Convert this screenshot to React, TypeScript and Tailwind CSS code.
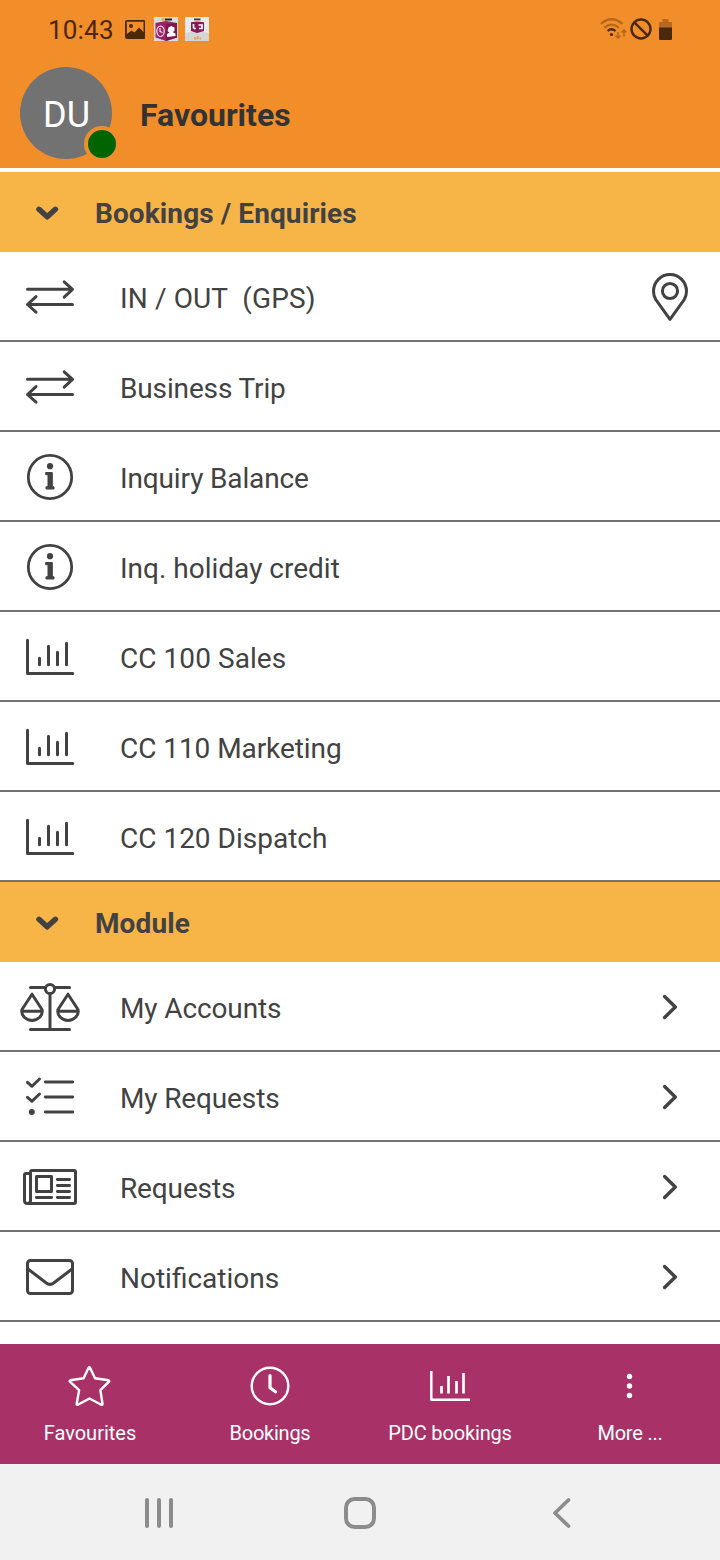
import type { ReactNode } from "react";

type Row = { label: string; icon: ReactNode; right?: ReactNode; tracking?: string };

const Icon = ({ children, className = "text-[#424242]" }: { children: ReactNode; className?: string }) => (
  <svg
    viewBox="0 0 60 60"
    width="60"
    height="60"
    fill="none"
    stroke="currentColor"
    strokeWidth="3"
    strokeLinecap="round"
    strokeLinejoin="round"
    className={`shrink-0 ${className}`}
  >
    {children}
  </svg>
);

const TransferIcon = () => (
  <Icon>
    <path d="M7.5 23.3H52.5M44.2 15.8L52.5 23.3L44.2 31.2" />
    <path d="M52.5 38.5H7.5M16 30.6L7.5 38.5L16 46.2" />
  </Icon>
);

const InfoIcon = () => (
  <Icon>
    <circle cx="30" cy="31" r="21.7" strokeWidth="2.8" />
    <circle cx="30" cy="20.2" r="3.1" fill="currentColor" stroke="none" />
    <path d="M26 26.5H32.3V40.8H34V43H26V40.8H28V28.7H26Z" fill="currentColor" strokeWidth="1" />
  </Icon>
);

const ChartIcon = () => (
  <Icon>
    <path d="M7.5 14.3V47.5H52.8" />
    <path d="M19.5 32.2V38.7M28.5 20.2V38.7M37.5 26.2V38.7M46.5 17.2V38.7" />
  </Icon>
);

const PinIcon = () => (
  <Icon>
    <path d="M30 53.3L15.8 33.6C14.2 31 13.5 28.5 13.5 25.3C13.5 15.8 21 8.5 30 8.5S46.5 15.8 46.5 25.3C46.5 28.5 45.8 31 44.2 33.6Z" />
    <circle cx="30" cy="25" r="7.6" />
  </Icon>
);

const ScaleIcon = () => (
  <Icon>
    <path d="M10.5 11.6H25M35 11.6H49.5M10.5 53.5H49.5M30 18V53" />
    <circle cx="30" cy="13" r="4.6" />
    <path d="M12 18.2L2 33.5C0.5 39.5 6.5 44.4 12 44.4S23.5 39.5 22 33.5ZM2 35.2H22" />
    <path d="M48 18.2L38 33.5C36.5 39.5 42.5 44.4 48 44.4S59.5 39.5 58 33.5ZM38 35.2H58" />
  </Icon>
);

const ChecklistIcon = () => (
  <Icon>
    <path d="M25.3 16H52.8M25.3 31H52.8M25.3 46H52.8" strokeWidth="2.8" />
    <path d="M7.5 16.3L12 20.3L19.5 13M7.5 31.3L12 35.3L19.5 28" />
    <circle cx="11.8" cy="46" r="3" fill="currentColor" stroke="none" />
  </Icon>
);

const NewspaperIcon = () => (
  <Icon>
    <path d="M10.5 44.5V16C10.5 15 11 14.5 12 14.5H54C55 14.5 55.5 15 55.5 16V46C55.5 47 55 47.5 54 47.5H7.5C5.5 47.5 4.5 46.3 4.5 44.5V19C4.5 18 5 17.5 6 17.5H10.5M10.5 44.5C10.5 46.3 9.3 47.5 7.5 47.5" />
    <rect x="16.5" y="20.5" width="15" height="15" />
    <path d="M37.3 23.5H49.6M37.3 29.5H49.6M37.3 35.5H49.6M37.3 41.5H49.6M16.3 41.5H31.7" strokeWidth="2.8" />
  </Icon>
);

const MailIcon = () => (
  <Icon>
    <rect x="7.5" y="14.5" width="45" height="33" rx="3" />
    <path d="M8 23L26 36.8C28.8 39 31.2 39 34 36.8L52 23" />
  </Icon>
);

const ChevronRight = () => (
  <Icon>
    <path d="M24.6 20.5L35.3 31L24.6 41.5" strokeWidth="3.4" />
  </Icon>
);

const bookings: Row[] = [
  { label: "IN / OUT\u00a0 (GPS)", icon: <TransferIcon />, right: <PinIcon />, tracking: "tracking-[0.12px]" },
  { label: "Business Trip", icon: <TransferIcon />, tracking: "tracking-[-0.14px]" },
  { label: "Inquiry Balance", icon: <InfoIcon />, tracking: "tracking-[-0.14px]" },
  { label: "Inq. holiday credit", icon: <InfoIcon /> },
  { label: "CC 100 Sales", icon: <ChartIcon />, tracking: "tracking-[0.06px]" },
  { label: "CC 110 Marketing", icon: <ChartIcon />, tracking: "tracking-[-0.06px]" },
  { label: "CC 120 Dispatch", icon: <ChartIcon /> },
];

const modules: Row[] = [
  { label: "My Accounts", icon: <ScaleIcon />, right: <ChevronRight />, tracking: "tracking-[-0.12px]" },
  { label: "My Requests", icon: <ChecklistIcon />, right: <ChevronRight />, tracking: "tracking-[-0.14px]" },
  { label: "Requests", icon: <NewspaperIcon />, right: <ChevronRight />, tracking: "tracking-[-0.14px]" },
  { label: "Notifications", icon: <MailIcon />, right: <ChevronRight /> },
];

const StatusBar = () => (
  <div className="flex h-[58px] items-center justify-between pl-12 pr-12 text-[#4a280b]">
    <div className="flex items-center">
      <span className="w-[77px] pt-0.5 text-[26px] leading-[30px] tracking-[0.2px]">10:43</span>
      <svg width="20" height="19" viewBox="0 0 20 19" className="mr-[9px]">
        <path
          fillRule="evenodd"
          fill="currentColor"
          d="M2 0H18.500Q20.500 0 20.500 2V17Q20.500 19 18.500 19H2Q0 19 0 17V2Q0 0 2 0ZM1.800 1.800V14L6.500 10.500L9.500 12.500L14 7.500L18.500 12V1.800ZM6 4A2 2 0 1 1 6 8A2 2 0 1 1 6 4Z"
        />
      </svg>
      <svg width="24" height="24" viewBox="0 0 24 24" className="mr-[7px]">
        <rect width="24" height="24" fill="#dcdadb" />
        <path d="M7.500 1.500H11V3.500H7.500Z" fill="#f29a2e" />
        <path d="M11 1.500H18V3.500H11Z" fill="#2b2028" />
        <path d="M1.500 6L12 4L23 6V20.500L12 24L1.500 20.500Z" fill="#9b2368" />
        <path d="M12 7.500L23 6V20.500L12 24Z" fill="#7c1651" />
        <ellipse cx="6.500" cy="14.300" rx="3.700" ry="5.200" fill="none" stroke="#f3e4ec" strokeWidth="1.200" />
        <path d="M6 11V14.500L8.500 15.500" fill="none" stroke="#f3e4ec" strokeWidth="1.200" />
        <path d="M14.500 10.500L17 9L20.500 10.500V14L18.500 15L21.500 16.500V19L13 20V17L15.500 15.500L13.500 14Z" fill="#fff" />
      </svg>
      <svg width="24" height="24" viewBox="0 0 24 24">
        <rect width="24" height="24" fill="#e9e9e9" />
        <path d="M0 16L12 14L24 16V24H0Z" fill="#d5d5d5" />
        <path d="M9 1.500H15.500V3.300H9Z" fill="#403039" />
        <path d="M6 5.300L12 4.500L19 5.300V14L12 16L6 14Z" fill="#861a59" />
        <path d="M8.500 7V10.500L10.500 12M13.500 8H17V11.500H14" fill="none" stroke="#fff" strokeWidth="1.700" />
        <path d="M9 20H11.500V22.500H9ZM12 19H13.500V22.500H12ZM14.500 20.500H16V22.500H14.500Z" fill="#eda04f" />
      </svg>
    </div>
    <div className="flex items-center">
      <svg width="27" height="22" viewBox="0 0 27 22" fill="none" stroke="#b66820" strokeWidth="2.200" className="mr-[3px]">
        <path d="M0.800 6Q11.500 -3.500 22.500 6" />
        <path d="M4.200 9.800Q11.500 3.500 19 9.800" />
        <path d="M7.500 13Q11.500 9.500 15.500 13" stroke="#4a280b" />
        <circle cx="11.500" cy="16.500" r="1.600" fill="#4a280b" stroke="none" />
        <path d="M18 14V19.500M15.500 17.500L18 20L20.500 17.500M24 18.500V13M21.500 14.500L24 12L26.500 14.500" strokeWidth="1.700" />
      </svg>
      <svg width="22" height="22" viewBox="0 0 22 22" fill="none" stroke="currentColor" strokeWidth="2.400" className="mr-[7px]">
        <circle cx="11" cy="11" r="9.500" />
        <path d="M4.300 4.300L17.700 17.700" />
      </svg>
      <svg width="13" height="21" viewBox="0 0 13 21">
        <path d="M3.500 0H9.500V3H13V9H0V3H3.500Z" fill="#b66820" />
        <path d="M0 8.500H13V20Q13 21 12 21H1Q0 21 0 20Z" fill="currentColor" />
      </svg>
    </div>
  </div>
);

const Header = () => (
  <div className="flex h-[110px] items-center pl-5">
    <div className="relative flex size-[92px] items-center justify-center rounded-full bg-[#727272]">
      <span className="pl-px pt-1 text-4xl text-white">DU</span>
      <span className="absolute -bottom-[3px] -right-2 size-9 rounded-full border-4 border-[#f28e2a] bg-[#006400]" />
    </div>
    <h1 className="ml-7 pt-1 text-[32px] font-bold leading-10 text-[#333]">Favourites</h1>
  </div>
);

const Section = ({ title, rows }: { title: string; rows: Row[] }) => (
  <section>
    <div className="flex h-20 items-center bg-[#f7b548] pl-[35px] text-[#424242]">
      <svg
        width="24"
        height="18"
        viewBox="0 0 24 18"
        fill="none"
        stroke="currentColor"
        strokeWidth="5.5"
        strokeLinecap="round"
        strokeLinejoin="round"
      >
        <path d="M4 6.3L12.2 13.8L20.400 6.3" />
      </svg>
      <h2 className="ml-9 pt-1 text-[28px] font-bold leading-8 tracking-[0.1px]">{title}</h2>
    </div>
    {rows.map((row) => (
      <div key={row.label} className="flex h-[90px] items-center border-b-2 border-[#727272] px-5">
        {row.icon}
        <span className={`ml-10 flex-1 pt-1.5 text-[28px] leading-8 text-[#424242] ${row.tracking ?? ""}`}>
          {row.label}
        </span>
        {row.right}
      </div>
    ))}
  </section>
);

const tabs = [
  {
    label: "Favourites",
    tracking: "",
    icon: (
      <path
        d="M28.600 11.800Q29.300 10.700 30 11.800L35 22.200L48.500 24.300Q49.800 24.700 49 25.700L40.400 34.200L42.500 47.700Q42.500 49.200 41.200 48.700L29.500 42.500L17.800 48.700Q16.500 49.200 16.700 47.700L19.100 34.200L9.900 25.700Q9.200 24.700 10.400 24.300L23.600 22.200Z"
        strokeWidth="2.4"
      />
    ),
  },
  {
    label: "Bookings",
    tracking: "tracking-[-0.25px]",
    icon: (
      <>
        <circle cx="30" cy="30" r="18.300" strokeWidth="2.4" />
        <path d="M30 19.500V31.700L35.500 35.700" strokeWidth="3.2" />
      </>
    ),
  },
  {
    label: "PDC bookings",
    tracking: "tracking-[-0.15px]",
    icon: (
      <>
        <path d="M11.300 15V43.700H50" strokeWidth="2.5" strokeLinecap="butt" />
        <path d="M21.500 30V37.500M28.500 20V37.500M36.500 25V37.500M43.500 17V37.500" strokeWidth="2.7" strokeLinecap="butt" />
      </>
    ),
  },
  {
    label: "More ...",
    tracking: "tracking-[-0.2px]",
    icon: (
      <g fill="currentColor" stroke="none">
        <circle cx="29.500" cy="20.500" r="2.700" />
        <circle cx="29.500" cy="30" r="2.700" />
        <circle cx="29.500" cy="39.500" r="2.700" />
      </g>
    ),
  },
];

const TabBar = () => (
  <div className="grid h-[120px] grid-cols-4 bg-[#a83268] text-white">
    {tabs.map((tab) => (
      <div key={tab.label} className="flex flex-col items-center pt-3">
        <Icon className="text-white">{tab.icon}</Icon>
        <span className={`mt-[5px] text-xl leading-6 ${tab.tracking}`}>{tab.label}</span>
      </div>
    ))}
  </div>
);

const SystemNav = () => (
  <div className="flex h-24 items-center bg-[#f1f1f1] pl-[144px] text-[#8c8c8c]">
    <svg width="30" height="34" viewBox="0 0 30 34" fill="none" stroke="currentColor" strokeWidth="4" strokeLinecap="round">
      <path d="M3 5V31M15 5V31M27 5V31" />
    </svg>
    <svg width="34" height="34" viewBox="0 0 34 34" fill="none" stroke="currentColor" strokeWidth="4" className="ml-[169px]">
      <rect x="3" y="4" width="28" height="28" rx="8.5" />
    </svg>
    <svg
      width="20"
      height="34"
      viewBox="0 0 20 34"
      fill="none"
      stroke="currentColor"
      strokeWidth="3.8"
      strokeLinecap="round"
      strokeLinejoin="round"
      className="ml-[175px]"
    >
      <path d="M16.500 5L3 18L16.500 31" />
    </svg>
  </div>
);

const App = () => {
  return (
    <div className="flex h-[1560px] w-[720px] flex-col overflow-hidden bg-white font-['Roboto',sans-serif]">
      <header className="bg-[#f28e2a]">
        <StatusBar />
        <Header />
      </header>
      <main className="flex-1 pt-1">
        <Section title="Bookings / Enquiries" rows={bookings} />
        <Section title="Module" rows={modules} />
      </main>
      <TabBar />
      <SystemNav />
    </div>
  );
};

export default App;
